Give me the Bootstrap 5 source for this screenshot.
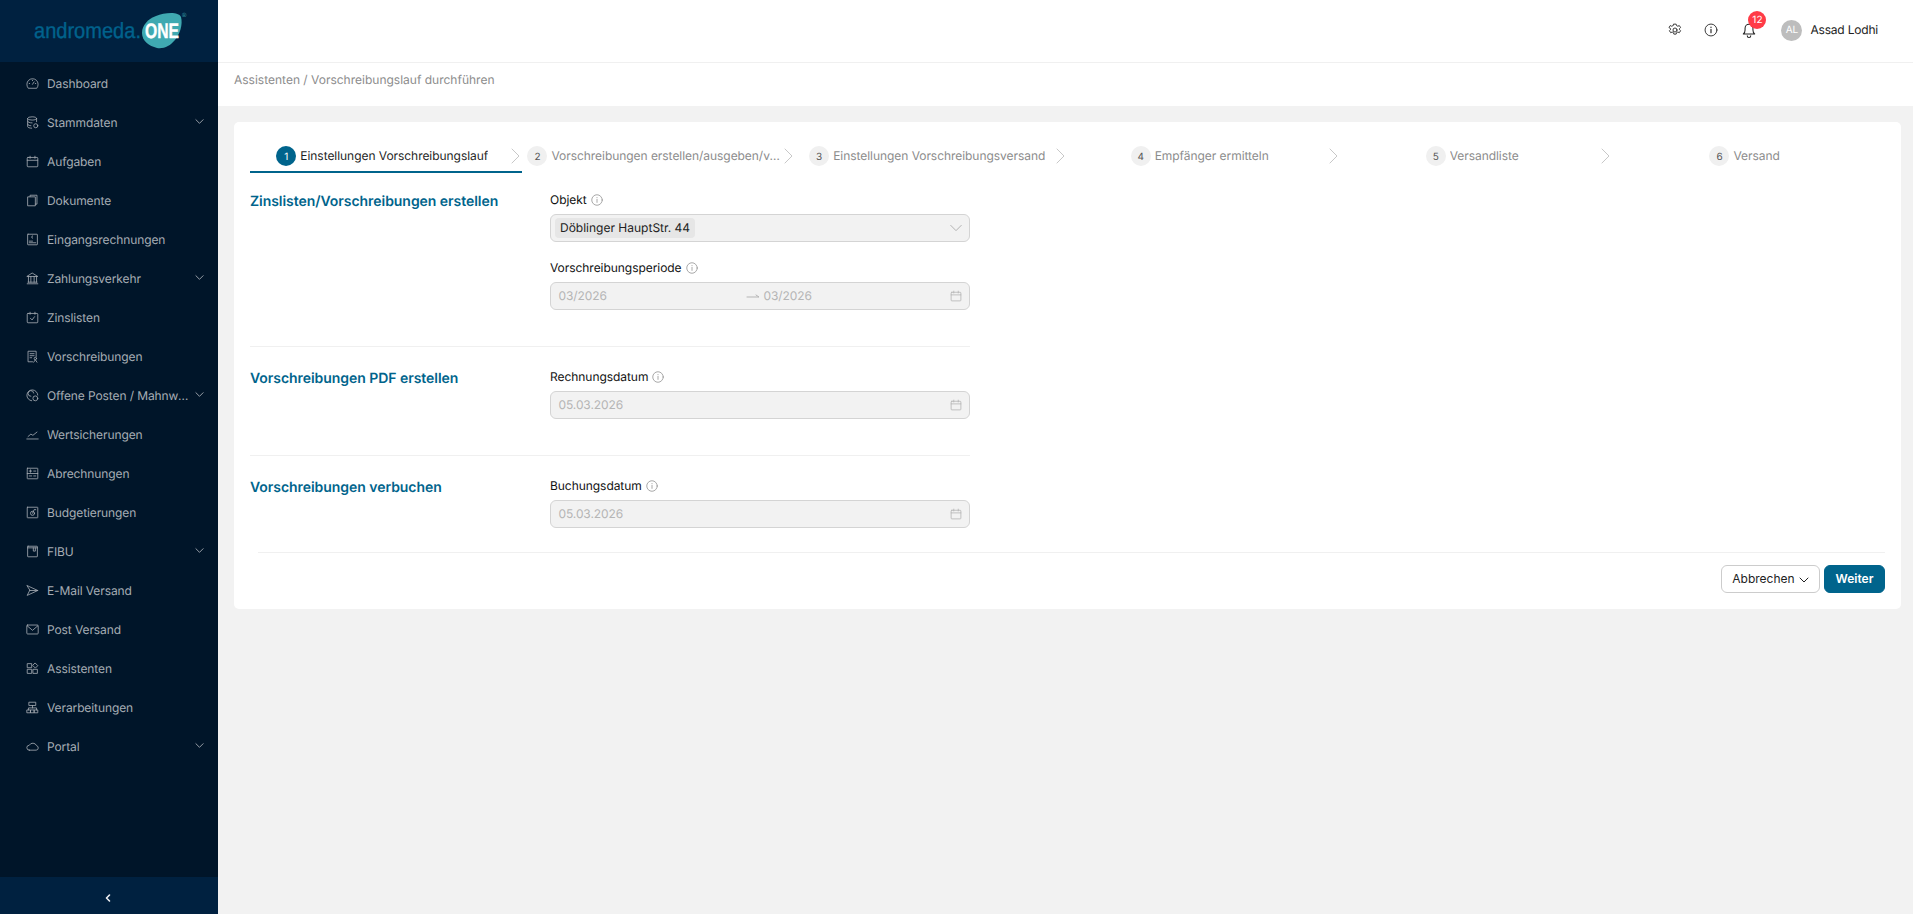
<!DOCTYPE html>
<html lang="de">
<head>
<meta charset="utf-8">
<title>andromeda ONE</title>
<link rel="stylesheet" href="https://cdn.jsdelivr.net/npm/bootstrap@5.3.0/dist/css/bootstrap.min.css">
<style>
html,body{height:100%;margin:0}
body{font-family:Inter,"Liberation Sans",sans-serif;font-size:12px;background:#f2f2f2;color:#1f1f1f;overflow:hidden;text-rendering:geometricPrecision}
.shell{height:914px}
.side{width:218px;background:#001529;flex:none}
.side-top{height:62px;background:#002140}
.side-menu{padding-top:2px}
.side-item{height:39px;padding:0 14px 0 26px;color:#a6adb4;font-size:12px;letter-spacing:-.1px}
.side-item svg.ico{width:13px;height:13px;margin-right:8px;flex:none}
.side-item .lbl{flex:1;min-width:0;white-space:nowrap;overflow:hidden;text-overflow:ellipsis}
.side-item svg.chev{width:9px;height:9px;flex:none;margin-left:2px;margin-top:-2px}
svg.ico,svg.chev,.ln{fill:none;stroke:currentColor;stroke-width:1;stroke-linecap:round;stroke-linejoin:round}
.side-foot{height:37px;background:#002140;color:#eef0f2;padding:4px 3px 0 0}
.side-foot svg{stroke-width:1.6}
.top-bar{height:63px;background:#fff;border-bottom:1px solid #f0f0f0;padding-right:35px;padding-bottom:2px}
.top-ico{width:14px;height:14px;color:#222}
.ic-gear{margin-right:22px}.ic-info{margin-right:24px}
.bell-wrap{width:14px;height:16px;margin-right:25px}
.bell-wrap svg{width:14px;height:16px;color:#222;display:block;stroke-width:1.2}
.bell-num{position:absolute;left:6px;top:-11px;width:18px;height:18px;background:#ff3b47;color:#fff;font-size:10px;border-radius:50%;line-height:18px;text-align:center}
.ava{width:21px;height:21px;background:#bdbdbd;color:#fff;border-radius:50%;font-size:10px;line-height:21px;text-align:center;margin-right:8px}
.uname{font-size:12px;color:#222;letter-spacing:-.2px}
.crumb{height:43px;background:#fff;padding:0 0 0 16px;color:#8c8c8c;font-size:12px;line-height:34px}
.main-area{padding:16px 12px 0 16px}
.panel{background:#fff;border-radius:5px;height:487px;padding:16px 16px 0 16px}
.steps{height:36px}
.stp{flex:0 0 16.666%;width:16.666%;min-width:0;color:#8c8c8c;font-size:12px;letter-spacing:-.05px;border-bottom:2px solid transparent;padding:3px 0 0 5px;height:35px}
.stp.cur{color:#1f1f1f;border-bottom-color:#00648c}
.stp-body{flex:1;min-width:0}
.stp-num{width:20px;height:20px;border-radius:50%;background:#f0f0f0;color:#555;font-size:10px;line-height:22px;text-align:center;margin-right:4px;flex:none}
.cur .stp-num{background:#00648c;color:#fff}
.stp-txt{white-space:nowrap;overflow:hidden;text-overflow:ellipsis}
.stp-arrow{width:10px;height:18px;flex:none;margin:0 2px 0 1px;color:#c8c8c8}
.stp-gap{width:13px;flex:none}
.frm-sec{width:720px;border-bottom:1px solid #f0f0f0;padding:0 0 36px 0}
.frm-first{padding-top:16px}
.frm-next{padding-top:20px}
.frm-last{border-bottom:0;padding-bottom:24px}
.sec-title{width:300px;flex:none;color:#00648c;font-size:14px;font-weight:600;line-height:20px;padding-top:1.5px;letter-spacing:-.05px}
.fld-col{width:420px;flex:none}
.fld-lbl{font-size:12px;color:#111;line-height:20px;margin-bottom:4px;letter-spacing:-.05px}
.fld-lbl svg{width:12px;height:12px;color:#8c8c8c;margin-left:4px;vertical-align:-2px}
.fld-box{height:28px;background:#f2f2f2;border:1px solid #d4d4d4;border-radius:6px;padding:0 7px 0 7.5px;color:#b5b5b5;font-size:12px;letter-spacing:-.1px}
.fld-box+.fld-lbl{margin-top:16px}
.fld-tag{background:#e6e6e6;color:#222;border-radius:4px;height:20px;line-height:20px;padding:0 5px;margin-left:-3.5px;letter-spacing:0}
.fld-ico{width:12px;height:12px;color:#b0b0b0;margin-left:auto;flex:none}
.fld-ico.drop{width:14px;height:14px;color:#a8a8a8;margin-right:-1px}
.rng-left{width:187px}
.rng-arrow{width:14px;height:8px;color:#b5b5b5;margin-right:4px}
.foot-row{margin-left:8px;border-top:1px solid #f0f0f0;padding:12px 0 0}
.btn-abort,.btn-next{height:28px;border-radius:6px;font-size:12px;padding:0;line-height:1}
.btn-abort{width:99px;background:#fff;border:1px solid #ccc;color:#222;margin-right:4px}
.btn-abort svg{width:10px;height:8px;margin-left:4px}
.btn-next{width:61px;background:#00648c;border:1px solid #00648c;color:#fff;font-weight:600}
.btn-next:hover,.btn-next:active{background:#00648c;color:#fff}
.logo{display:block}
.logo text{font-family:"Liberation Sans",Arial,sans-serif}
</style>
</head>
<body>
<div class="shell d-flex">
  <aside class="side d-flex flex-column">
    <div class="side-top">
      <svg class="logo" width="218" height="62" viewBox="0 0 218 62">
        <path d="M142 33c0-8 6-14 14-17 8-3 22-5 25 1 2 7-1 17-6 23-5 6-11 9-18 8-8-2-15-7-15-15z" fill="#3fa9b1"/>
        <text x="34" y="38" font-size="22" fill="#00628c" stroke="#00628c" stroke-width=".35" textLength="107" lengthAdjust="spacingAndGlyphs">andromeda.</text>
        <text x="145" y="37.500" font-size="21" font-weight="700" fill="#fff" stroke="#fff" stroke-width=".4" textLength="34" lengthAdjust="spacingAndGlyphs">ONE</text>
        <text x="182" y="17" font-size="6" fill="#3fa9b1">®</text>
      </svg>
    </div>
    <nav class="side-menu flex-grow-1">
      <a class="side-item d-flex align-items-center text-decoration-none"><svg class="ico" viewBox="0 0 16 16"><path d="M2.500 13.500a7 7 0 1 1 11 0zM8 9l2-3M4 8h.5M12 8h-.5M8 4v.5"/></svg><span class="lbl">Dashboard</span></a>
      <a class="side-item d-flex align-items-center text-decoration-none"><svg class="ico" viewBox="0 0 16 16"><ellipse cx="7.500" cy="3" rx="5.500" ry="2"/><path d="M2 3v10c0 1 2 2 5 2M13 3v4M2 6.500c0 1 2 2 5.500 2M2 10c0 1 2 2 4 2"/><circle cx="12" cy="12" r="2.500"/></svg><span class="lbl">Stammdaten</span><svg class="chev" viewBox="0 0 10 10"><path d="M1 3l4 4 4-4"/></svg></a>
      <a class="side-item d-flex align-items-center text-decoration-none"><svg class="ico" viewBox="0 0 16 16"><rect x="1.500" y="3" width="13" height="11.500" rx="1"/><path d="M1.500 6.500h13M5 1.500V4M11 1.500V4"/></svg><span class="lbl">Aufgaben</span></a>
      <a class="side-item d-flex align-items-center text-decoration-none"><svg class="ico" viewBox="0 0 16 16"><path d="M5 3V1.500h8.500v11H11.500M2.500 3.500H11.500V14.500H2.500z"/></svg><span class="lbl">Dokumente</span></a>
      <a class="side-item d-flex align-items-center text-decoration-none"><svg class="ico" viewBox="0 0 16 16"><rect x="2" y="1.500" width="12" height="13" rx=".5"/><path d="M4 12h8M4 10h4M8 3.500c-1.500 0-1.500 3 0 3"/></svg><span class="lbl">Eingangsrechnungen</span></a>
      <a class="side-item d-flex align-items-center text-decoration-none"><svg class="ico" viewBox="0 0 16 16"><path d="M8 1.500l6.500 4H1.500zM3 5.500v7M6 5.500v7M10 5.500v7M13 5.500v7M1.500 14.500h13M2.500 12.500h11"/></svg><span class="lbl">Zahlungsverkehr</span><svg class="chev" viewBox="0 0 10 10"><path d="M1 3l4 4 4-4"/></svg></a>
      <a class="side-item d-flex align-items-center text-decoration-none"><svg class="ico" viewBox="0 0 16 16"><rect x="1.500" y="3" width="13" height="11.500" rx="1"/><path d="M5 1.500V4M11 1.500V4M5.500 9l2 2 3-4"/></svg><span class="lbl">Zinslisten</span></a>
      <a class="side-item d-flex align-items-center text-decoration-none"><svg class="ico" viewBox="0 0 16 16"><path d="M8 14.500H2.500v-13h10v7M5 4.500h5M5 7h5M5 9.500h2"/><circle cx="11.500" cy="10.500" r="1.500"/><path d="M9.500 15l2-3 2 3"/></svg><span class="lbl">Vorschreibungen</span></a>
      <a class="side-item d-flex align-items-center text-decoration-none"><svg class="ico" viewBox="0 0 16 16"><path d="M7 14.500a6.700 6.700 0 1 1 7.500-7M9.500 5A3.500 3.500 0 1 0 6 9"/><circle cx="11.500" cy="11.500" r="3"/></svg><span class="lbl">Offene Posten / Mahnwesen</span><svg class="chev" viewBox="0 0 10 10"><path d="M1 3l4 4 4-4"/></svg></a>
      <a class="side-item d-flex align-items-center text-decoration-none"><svg class="ico" viewBox="0 0 16 16"><path d="M1 13.500h14M2.500 10.500l3.500-3 2.500 1.500 5-4"/></svg><span class="lbl">Wertsicherungen</span></a>
      <a class="side-item d-flex align-items-center text-decoration-none"><svg class="ico" viewBox="0 0 16 16"><rect x="1.500" y="1.500" width="13" height="13" rx=".5"/><path d="M4 5h3M9.500 5h2.500M4 11h3M9.500 11h2.500M5.500 3.500v3M1.500 8h13"/></svg><span class="lbl">Abrechnungen</span></a>
      <a class="side-item d-flex align-items-center text-decoration-none"><svg class="ico" viewBox="0 0 16 16"><rect x="1.500" y="1.500" width="13" height="13" rx=".5"/><circle cx="8" cy="9" r="2.500"/><path d="M8 9l2-4.500h2"/></svg><span class="lbl">Budgetierungen</span></a>
      <a class="side-item d-flex align-items-center text-decoration-none"><svg class="ico" viewBox="0 0 16 16"><rect x="2" y="1.500" width="12" height="13" rx=".5"/><path d="M2 3.500h12M9 3.500v4h2.500v-4"/></svg><span class="lbl">FIBU</span><svg class="chev" viewBox="0 0 10 10"><path d="M1 3l4 4 4-4"/></svg></a>
      <a class="side-item d-flex align-items-center text-decoration-none"><svg class="ico" viewBox="0 0 16 16"><path d="M1.500 2l13 6-13 6 3-6zM4.500 8h10"/></svg><span class="lbl">E-Mail Versand</span></a>
      <a class="side-item d-flex align-items-center text-decoration-none"><svg class="ico" viewBox="0 0 16 16"><rect x="1" y="2.500" width="14" height="11" rx="1"/><path d="M1.500 3.500L8 9l6.500-5.500"/></svg><span class="lbl">Post Versand</span></a>
      <a class="side-item d-flex align-items-center text-decoration-none"><svg class="ico" viewBox="0 0 16 16"><path d="M2 2h5v5H2zM9 9h5v5H9zM2 9h5v5H2zM11.500 1.500l3 3-3 3-3-3z"/></svg><span class="lbl">Assistenten</span></a>
      <a class="side-item d-flex align-items-center text-decoration-none"><svg class="ico" viewBox="0 0 16 16"><path d="M4 1.500h8v4H4zM8 5.500v3M3 11V8.500h10V11M1.500 11h4v3.500h-4zM6 11h4v3.500H6zM10.500 11h4v3.500h-4z"/></svg><span class="lbl">Verarbeitungen</span></a>
      <a class="side-item d-flex align-items-center text-decoration-none"><svg class="ico" viewBox="0 0 16 16"><path d="M4 12.500h8.500a2.800 2.800 0 0 0 .5-5.500A5 5 0 0 0 4 6.500a3 3 0 0 0 0 6z"/></svg><span class="lbl">Portal</span><svg class="chev" viewBox="0 0 10 10"><path d="M1 3l4 4 4-4"/></svg></a>
    </nav>
    <div class="side-foot d-flex align-items-center justify-content-center">
      <svg class="ln" width="8" height="10" viewBox="0 0 8 10"><path d="M5.500 2L2.500 5l3 3"/></svg>
    </div>
  </aside>
  <div class="flex-grow-1 d-flex flex-column" style="min-width:0">
    <header class="top-bar d-flex align-items-center justify-content-end">
      <svg class="top-ico ic-gear ln" viewBox="0 0 16 16"><path d="M6.700 1.300h2.600l.5 1.700 1.500.7 1.600-.8 1.500 2.300-1.300 1.200v1.200l1.300 1.200-1.500 2.300-1.600-.8-1.500.7-.5 1.700H6.700l-.5-1.700-1.500-.7-1.600.8-1.500-2.300 1.300-1.200V6.400L1.100 5.200l1.500-2.300 1.600.8 1.500-.7z"/><circle cx="8" cy="8" r="2.300"/></svg>
      <svg class="top-ico ic-info ln" viewBox="0 0 16 16"><circle cx="8" cy="8" r="6.800"/><path d="M8 7.200v4M8 4.700v.3" stroke-width="1.300"/></svg>
      <div class="bell-wrap position-relative">
        <svg class="ln" viewBox="0 0 16 18"><path d="M1.500 13.500c1.500-1 2-2 2-4.500V7a4.500 4.500 0 0 1 9 0v2c0 2.500.5 3.500 2 4.500zM6 15.500a2 2 0 0 0 4 0"/></svg>
        <span class="bell-num">12</span>
      </div>
      <div class="ava">AL</div>
      <span class="uname">Assad Lodhi</span>
    </header>
    <div class="crumb">Assistenten / Vorschreibungslauf durchführen</div>
    <main class="main-area">
      <section class="panel">
        <div class="steps d-flex">
          <div class="stp cur d-flex align-items-center"><div class="stp-body d-flex align-items-center justify-content-center"><span class="stp-num">1</span><span class="stp-txt">Einstellungen Vorschreibungslauf</span></div><svg class="stp-arrow ln" viewBox="0 0 10 18"><path d="M2 2l7 7-7 7"/></svg></div>
          <div class="stp d-flex align-items-center"><div class="stp-body d-flex align-items-center justify-content-center"><span class="stp-num">2</span><span class="stp-txt">Vorschreibungen erstellen/ausgeben/verbuchen</span></div><svg class="stp-arrow ln" viewBox="0 0 10 18"><path d="M2 2l7 7-7 7"/></svg></div>
          <div class="stp d-flex align-items-center"><div class="stp-body d-flex align-items-center justify-content-center"><span class="stp-num">3</span><span class="stp-txt">Einstellungen Vorschreibungsversand</span></div><svg class="stp-arrow ln" viewBox="0 0 10 18"><path d="M2 2l7 7-7 7"/></svg></div>
          <div class="stp d-flex align-items-center"><div class="stp-body d-flex align-items-center justify-content-center"><span class="stp-num">4</span><span class="stp-txt">Empfänger ermitteln</span></div><svg class="stp-arrow ln" viewBox="0 0 10 18"><path d="M2 2l7 7-7 7"/></svg></div>
          <div class="stp d-flex align-items-center"><div class="stp-body d-flex align-items-center justify-content-center"><span class="stp-num">5</span><span class="stp-txt">Versandliste</span></div><svg class="stp-arrow ln" viewBox="0 0 10 18"><path d="M2 2l7 7-7 7"/></svg></div>
          <div class="stp d-flex align-items-center"><div class="stp-body d-flex align-items-center justify-content-center"><span class="stp-num">6</span><span class="stp-txt">Versand</span></div><span class="stp-gap"></span></div>
        </div>
        <div class="frm-sec frm-first d-flex">
          <div class="sec-title">Zinslisten/Vorschreibungen erstellen</div>
          <div class="fld-col">
            <div class="fld-lbl">Objekt<svg class="ln" viewBox="0 0 16 16"><circle cx="8" cy="8" r="7"/><path d="M8 7.200v4M8 4.700v.3"/></svg></div>
            <div class="fld-box d-flex align-items-center"><span class="fld-tag">Döblinger HauptStr. 44</span><svg class="fld-ico drop ln" viewBox="0 0 16 16"><path d="M2 5l6 6 6-6"/></svg></div>
            <div class="fld-lbl">Vorschreibungsperiode<svg class="ln" viewBox="0 0 16 16"><circle cx="8" cy="8" r="7"/><path d="M8 7.200v4M8 4.700v.3"/></svg></div>
            <div class="fld-box d-flex align-items-center"><span class="rng-left">03/2026</span><svg class="rng-arrow ln" viewBox="0 0 14 8"><path d="M1 5h12L10 3"/></svg><span>03/2026</span><svg class="fld-ico ln" viewBox="0 0 16 16"><rect x="1.500" y="3" width="13" height="11.500" rx="1"/><path d="M1.500 6.500h13M5 1.500V4M11 1.500V4"/></svg></div>
          </div>
        </div>
        <div class="frm-sec frm-next d-flex">
          <div class="sec-title">Vorschreibungen PDF erstellen</div>
          <div class="fld-col">
            <div class="fld-lbl">Rechnungsdatum<svg class="ln" viewBox="0 0 16 16"><circle cx="8" cy="8" r="7"/><path d="M8 7.200v4M8 4.700v.3"/></svg></div>
            <div class="fld-box d-flex align-items-center"><span>05.03.2026</span><svg class="fld-ico ln" viewBox="0 0 16 16"><rect x="1.500" y="3" width="13" height="11.500" rx="1"/><path d="M1.500 6.500h13M5 1.500V4M11 1.500V4"/></svg></div>
          </div>
        </div>
        <div class="frm-sec frm-next frm-last d-flex">
          <div class="sec-title">Vorschreibungen verbuchen</div>
          <div class="fld-col">
            <div class="fld-lbl">Buchungsdatum<svg class="ln" viewBox="0 0 16 16"><circle cx="8" cy="8" r="7"/><path d="M8 7.200v4M8 4.700v.3"/></svg></div>
            <div class="fld-box d-flex align-items-center"><span>05.03.2026</span><svg class="fld-ico ln" viewBox="0 0 16 16"><rect x="1.500" y="3" width="13" height="11.500" rx="1"/><path d="M1.500 6.500h13M5 1.500V4M11 1.500V4"/></svg></div>
          </div>
        </div>
        <div class="foot-row d-flex justify-content-end">
          <button type="button" class="btn btn-abort">Abbrechen<svg class="ln" viewBox="0 0 10 8"><path d="M1 2l4 4 4-4"/></svg></button>
          <button type="button" class="btn btn-next">Weiter</button>
        </div>
      </section>
    </main>
  </div>
</div>
<script src="https://cdn.jsdelivr.net/npm/bootstrap@5.3.0/dist/js/bootstrap.bundle.min.js"></script>
</body>
</html>
